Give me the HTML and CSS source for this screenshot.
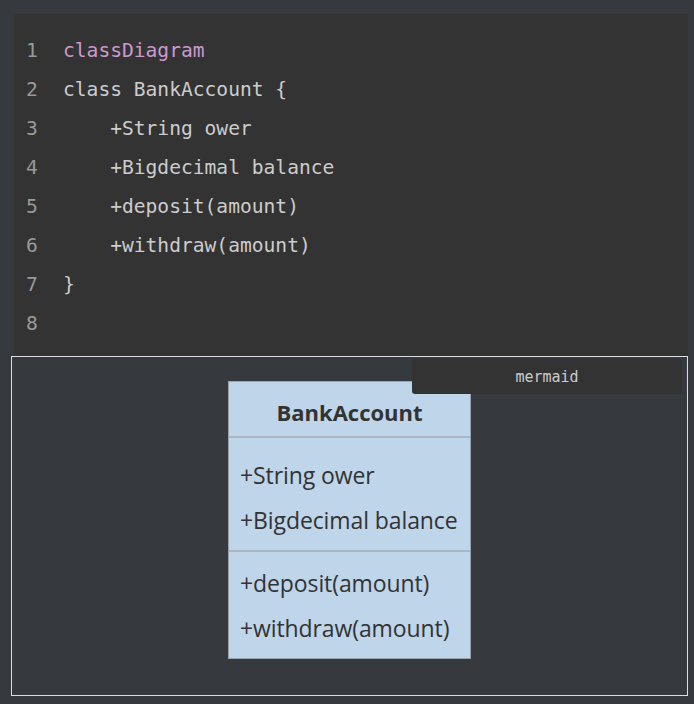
FILE: index.html
```html
<!DOCTYPE html>
<html>
<head>
<meta charset="utf-8">
<link rel="stylesheet" href="styles.css">
</head>
<body>
<div class="page">
  <div class="code">
    <div class="line"><span class="ln">1</span><span class="kw">classDiagram</span></div>
    <div class="line"><span class="ln">2</span><span class="tx">class BankAccount {</span></div>
    <div class="line"><span class="ln">3</span><span class="tx">    +String ower</span></div>
    <div class="line"><span class="ln">4</span><span class="tx">    +Bigdecimal balance</span></div>
    <div class="line"><span class="ln">5</span><span class="tx">    +deposit(amount)</span></div>
    <div class="line"><span class="ln">6</span><span class="tx">    +withdraw(amount)</span></div>
    <div class="line"><span class="ln">7</span><span class="tx">}</span></div>
    <div class="line"><span class="ln">8</span><span class="tx"></span></div>
  </div>
  <div class="diagram">
    <div class="label">mermaid</div>
    <div class="classbox">
      <div class="title">BankAccount</div>
      <div class="section members">
        <div class="row">+String ower</div>
        <div class="row">+Bigdecimal balance</div>
      </div>
      <div class="section methods">
        <div class="row">+deposit(amount)</div>
        <div class="row">+withdraw(amount)</div>
      </div>
    </div>
  </div>
</div>
</body>
</html>
```
FILE: styles.css
```css
html, body {
  margin: 0;
  padding: 0;
  background: #363a3f;
}
.page {
  width: 694px;
  height: 704px;
  padding-top: 14px;
  box-sizing: border-box;
  overflow: hidden;
}
.code {
  margin: 0 6px 0 14px;
  background: #333333;
  padding: 17px 0 12px 12px;
  font-family: "DejaVu Sans Mono", monospace;
  font-size: 19.6px;
  line-height: 39px;
  height: 342px;
  box-sizing: border-box;
}
.line {
  display: grid;
  grid-template-columns: 37px 1fr;
  white-space: pre;
}
.ln {
  color: #999999;
}
.kw {
  color: #cc99cd;
}
.tx {
  color: #cccccc;
}
.diagram {
  position: relative;
  margin: 0 6px 0 11px;
  height: 340px;
  border: 1px solid #dddddd;
  box-sizing: border-box;
  display: flex;
  justify-content: center;
  padding-top: 24px;
}
.label {
  position: absolute;
  top: 2px;
  right: 5px;
  width: 270px;
  height: 35px;
  background: #333333;
  border-radius: 3px;
  color: #cccccc;
  font-family: "DejaVu Sans Mono", monospace;
  font-size: 15px;
  display: flex;
  align-items: center;
  justify-content: center;
}
.classbox {
  width: 243px;
  height: 278px;
  box-sizing: border-box;
  background: #bed5ea;
  border: 1px solid #9aa3ad;
  font-family: "Open Sans", sans-serif;
  color: #333333;
  display: flex;
  flex-direction: column;
}
.title {
  height: 56px;
  display: flex;
  align-items: center;
  justify-content: center;
  padding-top: 6px;
  font-weight: bold;
  font-size: 22px;
  border-bottom: 2px solid #aab6c2;
  box-sizing: border-box;
}
.section {
  padding: 15px 0 0 11px;
  box-sizing: border-box;
}
.members {
  height: 114px;
  border-bottom: 2px solid #aab6c2;
}
.row {
  font-size: 23px;
  line-height: 45px;
  height: 45px;
  white-space: nowrap;
  letter-spacing: -0.1px;
}
.methods {
  padding-top: 9px;
}
```
